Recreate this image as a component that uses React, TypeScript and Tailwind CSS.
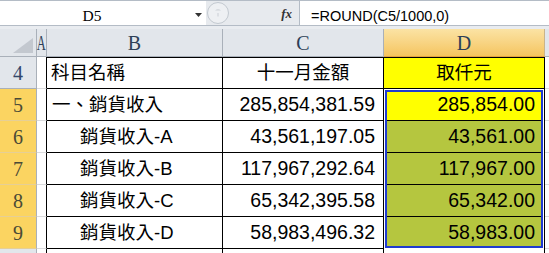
import React from 'react';

type Row = { n: string; b: string; indent: boolean; c: string; d: string; active?: boolean };

const rows: Row[] = [
  { n: '5', b: '一、銷貨收入', indent: false, c: '285,854,381.59', d: '285,854.00', active: true },
  { n: '6', b: '銷貨收入-A', indent: true, c: '43,561,197.05', d: '43,561.00' },
  { n: '7', b: '銷貨收入-B', indent: true, c: '117,967,292.64', d: '117,967.00' },
  { n: '8', b: '銷貨收入-C', indent: true, c: '65,342,395.58', d: '65,342.00' },
  { n: '9', b: '銷貨收入-D', indent: true, c: '58,983,496.32', d: '58,983.00' },
];

const serif = { fontFamily: '"Liberation Serif", "DejaVu Serif", serif' };
const sans = { fontFamily: '"Liberation Sans", "Noto Sans CJK TC", sans-serif' };

export default function App() {
  return (
    <div className="relative w-[549px] h-[253px] overflow-hidden bg-white">
      {/* Formula bar */}
      <div className="flex h-[26px] border-t border-b border-[#b4bcc6]">
        <div className="flex w-[206px] bg-white">
          <div className="w-[184px] pt-[5px] leading-[20px] text-center text-[15.5px] text-black" style={serif}>
            D5
          </div>
          <div className="flex-1 flex items-start pt-[12px] pl-[11px]">
            <svg width="7" height="4" viewBox="0 0 7 4">
              <path d="M0 0 H7 L3.5 4 Z" fill="#333" />
            </svg>
          </div>
        </div>
        <div className="flex w-[94px] bg-[#e7eaee] border-r border-[#b4bcc6]">
          <div className="w-[26px] flex items-center">
            <svg width="24" height="24" viewBox="0 0 24 24">
              <circle cx="12" cy="12" r="10.5" fill="#eef0f3" stroke="#c3c9d0" strokeWidth="1" />
              <path d="M9 9.5 Q12 7 15 9.5 Z" fill="#cdd2d8" />
              <rect x="11.2" y="12" width="1.6" height="3.5" fill="#d7dbe0" />
            </svg>
          </div>
          <div className="flex-1 flex items-center justify-end pr-[7px]">
            <span className="italic font-bold text-[13px] text-[#333] leading-none" style={serif}>
              fx
            </span>
          </div>
        </div>
        <div className="flex-1 bg-white pl-[11px] pt-[5px] leading-[20px] text-[14.5px] text-black" style={sans}>
          =ROUND(C5/1000,0)
        </div>
      </div>
      <div className="h-[3px] bg-[#e9ecf0]" />

      {/* Column headers */}
      <div className="flex h-[28px] text-[20px] text-[#2d3f57]" style={serif}>
        <div className="w-[37px] bg-[#e2e6eb] border-r border-b border-[#a9b0b9] flex items-end justify-end pr-[3px] pb-[3px]">
          <svg width="20" height="15" viewBox="0 0 20 15">
            <path d="M20 0 L20 15 L0 15 Z" fill="#c3c8cf" />
          </svg>
        </div>
        <div className="w-[10px] bg-[#e2e6eb] border-r border-b border-[#a9b0b9] flex items-center justify-center">
          <span className="inline-block scale-x-[0.62]">A</span>
        </div>
        <div className="w-[176px] bg-[#e2e6eb] border-r border-b border-[#a9b0b9] flex items-center justify-center">
          B
        </div>
        <div className="w-[161px] bg-[#e2e6eb] border-r border-b border-[#a9b0b9] flex items-center justify-center">
          C
        </div>
        <div className="w-[161px] bg-gradient-to-b from-[#fbe3a4] to-[#f5c55e] border-r border-b border-r-[#c9b48a] border-b-[#e3a33f] flex items-center justify-center">
          D
        </div>
        <div className="flex-1 bg-[#e2e6eb] border-b border-[#a9b0b9]" />
      </div>

      {/* Row 4 */}
      <div className="flex h-[32px] text-[18.5px] text-black" style={sans}>
        <div className="w-[37px] bg-[#e2e6eb] border-r border-b border-[#a9b0b9] flex items-center justify-center text-[20px] text-[#34486a]" style={serif}>
          4
        </div>
        <div className="w-[10px] border-r border-black border-b border-b-[#d9dadc]" />
        <div className="w-[176px] border-t border-r border-b border-black flex items-center pl-[4px]">
          科目名稱
        </div>
        <div className="w-[161px] border-t border-r border-b border-black flex items-center justify-center">
          十一月金額
        </div>
        <div className="w-[161px] bg-[#ffff00] border-t border-r border-b border-black flex items-center justify-center">
          取仟元
        </div>
        <div className="flex-1 border-b border-[#d9dadc]" />
      </div>

      {/* Rows 5-9 */}
      {rows.map((r) => (
        <div key={r.n} className="flex h-[32px] text-black" style={sans}>
          <div className="w-[37px] bg-[#fbd461] border-r border-b border-r-[#a9b0b9] border-b-[#e6cf95] flex items-center justify-center text-[20px] text-[#4a4a36]" style={serif}>
            {r.n}
          </div>
          <div className="w-[10px] border-r border-black border-b border-b-[#d9dadc]" />
          <div className={`w-[176px] border-r border-b border-black flex items-center text-[18.5px] ${r.indent ? 'pl-[33px]' : 'pl-[5px]'}`}>
            {r.b}
          </div>
          <div className="w-[161px] border-r border-b border-black flex items-center justify-end pr-[8px] text-[19.5px]">
            {r.c}
          </div>
          <div className={`w-[161px] border-r border-b border-black flex items-center justify-end pr-[9px] text-[19.5px] ${r.active ? 'bg-[#ffff00]' : 'bg-[#b5c63f]'}`}>
            {r.d}
          </div>
          <div className="flex-1 border-b border-[#d9dadc]" />
        </div>
      ))}

      {/* Row 10 partial */}
      <div className="flex h-[4px]">
        <div className="w-[37px] bg-[#e2e6eb] border-r border-[#a9b0b9]" />
        <div className="w-[10px] border-r border-black" />
        <div className="w-[176px] border-r border-black" />
        <div className="w-[161px] border-r border-black" />
        <div className="w-[161px] border-r border-black" />
        <div className="flex-1" />
      </div>

      {/* Selection outline D5:D9 */}
      <div className="absolute left-[384px] top-[89px] w-[160px] h-[160px] border border-white pointer-events-none">
        <div className="w-full h-full border-2 border-[#1f3bd0]" />
      </div>
    </div>
  );
}
